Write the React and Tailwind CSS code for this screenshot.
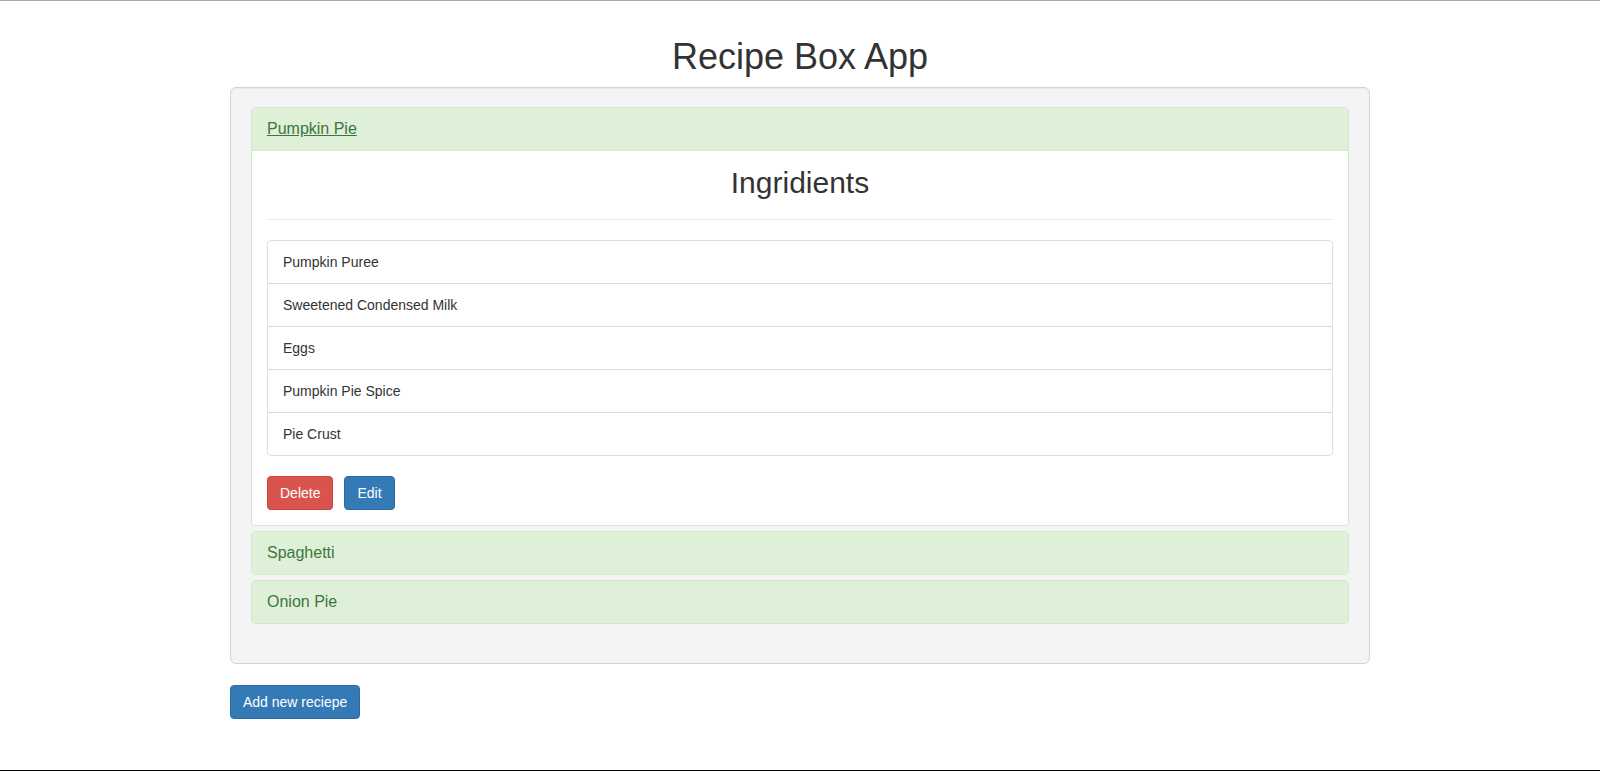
import React from 'react';

const recipes = [
  {
    name: 'Pumpkin Pie',
    ingredients: ['Pumpkin Puree', 'Sweetened Condensed Milk', 'Eggs', 'Pumpkin Pie Spice', 'Pie Crust'],
  },
  { name: 'Spaghetti', ingredients: ['Noodles', 'Tomato Sauce', 'Meatballs'] },
  { name: 'Onion Pie', ingredients: ['Onion', 'Pie Crust'] },
];

const RecipePanel = ({ recipe, open, onToggle }) => (
  <div className="border border-[#d6e9c6] rounded-[4px] bg-white overflow-hidden">
    <div
      className={`bg-[#dff0d8] px-[15px] py-[10px] text-[16px] leading-[22px] ${open ? 'border-b border-[#d6e9c6]' : ''}`}
    >
      <a
        href="#"
        onClick={(e) => {
          e.preventDefault();
          onToggle();
        }}
        className={`block w-fit text-[16px] leading-[22px] text-[#3c763d] ${open ? 'underline' : 'no-underline'}`}
      >
        {recipe.name}
      </a>
    </div>
    {open && (
      <div className="p-[15px]">
        <h2 className="text-[30px] leading-[33px] text-center text-[#333]">Ingridients</h2>
        <hr className="my-[20px] border-0 border-t border-[#eee]" />
        <ul className="border border-[#ddd] rounded-[4px] divide-y divide-[#ddd]">
          {recipe.ingredients.map((item) => (
            <li key={item} className="py-[10px] px-[15px] text-[14px] leading-[22px] text-[#333]">
              {item}
            </li>
          ))}
        </ul>
        <div className="flex mt-[20px]">
          <button className="h-[34px] px-[12px] text-[14px] text-white bg-[#d9534f] border border-[#d43f3a] rounded-[4px]">
            Delete
          </button>
          <button className="ml-[11px] h-[34px] px-[12px] text-[14px] text-white bg-[#337ab7] border border-[#2e6da4] rounded-[4px]">
            Edit
          </button>
        </div>
      </div>
    )}
  </div>
);

const App = () => {
  const [openIndex, setOpenIndex] = React.useState(0);

  return (
    <div
      className="h-[771px] bg-white border-t border-[#ababab] border-b border-b-black overflow-hidden text-[#333]"
      style={{ fontFamily: '"Liberation Sans", Arial, sans-serif' }}
    >
      <div className="w-[1140px] mx-auto pt-[36px]">
        <h1 className="text-[36px] leading-[40px] text-center text-[#333] mb-[10px]">Recipe Box App</h1>
        <div className="bg-[#f4f4f4] border border-[#d3d3d3] rounded-[6px] px-[20px] py-[19px] shadow-[inset_0_1px_1px_rgba(0,0,0,0.05)]">
          <div className="flex flex-col gap-[5px] mb-[20px]">
            {recipes.map((r, i) => (
              <RecipePanel
                key={r.name}
                recipe={r}
                open={openIndex === i}
                onToggle={() => setOpenIndex(openIndex === i ? -1 : i)}
              />
            ))}
          </div>
        </div>
        <button className="mt-[21px] h-[34px] px-[12px] text-[14px] text-white bg-[#337ab7] border border-[#2e6da4] rounded-[4px]">
          Add new reciepe
        </button>
      </div>
    </div>
  );
};

export default App;
